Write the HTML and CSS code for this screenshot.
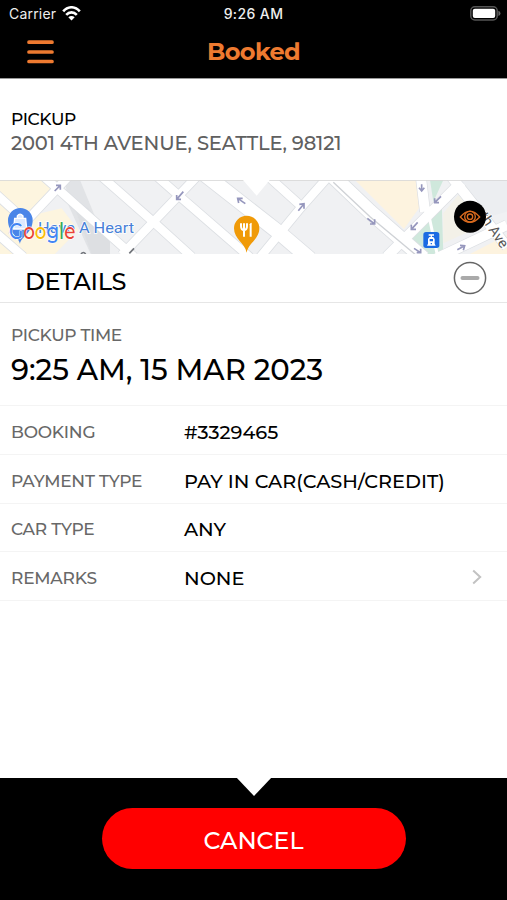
FILE: index.html
```html
<!DOCTYPE html>
<html lang="en">
<head>
<meta charset="utf-8">
<title>Booked</title>
<link rel="stylesheet" href="styles.css">
</head>
<body>
<div class="app">
  <header class="top">
    <div class="status">
      <div class="carrier"><span class="carrier-name">Carrier</span>
        <svg class="wifi" width="19" height="15" viewBox="0 0 19 15" fill="none" stroke="#fff" stroke-width="2.6"><path d="M1.2 5.4C6-.1 13-.1 17.8 5.4M4.2 8.8C7.3 5.5 11.7 5.5 14.8 8.8"/><path d="M6.3 11.2Q9.5 8.7 12.7 11.2L9.5 14.6Z" fill="#fff" stroke="none"/></svg>
      </div>
      <span class="clock">9:26 AM</span>
      <svg class="battery" width="31" height="15" viewBox="0 0 31 15"><rect x=".8" y=".8" width="26.4" height="13.2" rx="4" fill="#000" stroke="#555" stroke-width="1.5"/><rect x="2.8" y="2.8" width="22.4" height="9.2" rx="2" fill="#fff"/><path d="M28.4 4.8Q30.5 5.6 30.5 7.4T28.4 10Z" fill="#666"/></svg>
    </div>
    <div class="nav">
      <svg class="menu" width="27" height="24" viewBox="0 0 27 24" stroke="#ee7a30" stroke-width="3.7" stroke-linecap="round"><path d="M2 2.2H25M2 12H25M2 21.5H25"/></svg>
      <h1 class="title">Booked</h1>
    </div>
  </header>

  <section class="address">
    <h2 class="pickup">PICKUP</h2>
    <p class="street">2001 4TH AVENUE, SEATTLE, 98121</p>
  </section>

  <svg class="map" width="507" height="74" viewBox="0 15 1521 222">
    <rect y="15" width="1521" height="222" fill="#f0f1f3"/>
    <path d="M0 15H185L100 120L185 100L235 165L165 237H0Z" fill="#fdf5df"/>
    <path d="M195 15H240L275 100L330 237H272L205 90Z" fill="#e1e3e6"/>
    <path d="M215 75L265 100L330 200V237H275Z" fill="#dddfe2"/>
    <path d="M1065 15H1255L1260 95L1212 162Z" fill="#fdf3df"/>
    <path d="M1235 180L1325 75L1330 237H1250Z" fill="#cfe8dc"/>
    <path d="M1290 15H1330L1300 80Z" fill="#cfe8dc"/>
    <path d="M1330 115L1375 60L1450 150L1330 205Z" fill="#f3f1e8"/>
    <path d="M1370 15H1521V110L1450 130Z" fill="#eceef1"/>
    <path d="M1410 237L1521 180V237Z" fill="#fdf3df"/>
    <g fill="none" stroke="#dcdfe3">
      <path stroke-width="30" d="M115 -10L402 245M-20 50L85 145M-10 175L70 245M35 185L205 5M300 0L465 145L575 245M365 240L595 0M455 -10L540 65L750 247M800 0L905 95M780 247L905 95L985 5"/>
      <path stroke-width="48" d="M610 -5L840 175L930 252M1000 5L1110 110L1270 250"/>
      <path stroke-width="34" d="M1262 0L1275 110M1160 245L1385 20M1350 0L1521 215M1310 250L1521 150"/>
    </g>
    <g fill="none" stroke="#fff">
      <path stroke-width="25" d="M115 -10L402 245M-20 50L85 145M-10 175L70 245M35 185L205 5M300 0L465 145L575 245M365 240L595 0M455 -10L540 65L750 247M800 0L905 95M780 247L905 95L985 5"/>
      <path stroke-width="43" d="M610 -5L840 175L930 252M1000 5L1110 110L1270 250"/>
      <path stroke-width="30" d="M1262 0L1275 110M1160 245L1385 20M1350 0L1521 215M1310 250L1521 150"/>
      <path stroke-width="9" d="M1280 90L1312 240"/>
    </g>
    <path d="M1000 22L1110 125L1250 242" fill="none" stroke="#cfd2d6" stroke-width="4"/>
    <g fill="none" stroke="#9697bd" stroke-width="5">
      <path d="M164 48L181 31M168 31H181V44"/>
      <path d="M550 50L530 73M530 60V73H543M736 86L713 70M716 84L713 70L728 70M895 107L912 86M898 88L912 86V101"/>
      <path d="M1102 130L1124 147M1124 133V147H1110M1265 28V46M1257 38L1265 48L1273 38M1323 64L1304 83M1304 70V83H1317M1253 142L1234 163M1234 149V163H1248M1372 224L1394 212M1380 211L1394 212L1390 226M1242 220L1262 233M1262 221V233H1250"/>
      <path d="M388 235L402 220M243 237Q250 228 257 237" stroke="#72757b"/>
    </g>
    <path d="M60 207C56 185 24 173 24 136A37 37 0 0 1 98 136C98 173 64 185 60 207Z" fill="#4a85e8"/>
    <path d="M44 130H77L80 162H41ZM52 130V123Q60 112 69 123V130" fill="#dce9ff" stroke="#fff" stroke-width="4"/>
    <text x="114" y="174" class="place" textLength="288" lengthAdjust="spacingAndGlyphs">Have A Heart</text>
    <text x="27" y="193" class="google" textLength="199" lengthAdjust="spacingAndGlyphs"><tspan fill="#4285f4">G</tspan><tspan fill="#ea4335">o</tspan><tspan fill="#fbbc05">o</tspan><tspan fill="#4285f4">g</tspan><tspan fill="#34a853">l</tspan><tspan fill="#ea4335">e</tspan></text>
    <path d="M740 233C735 204 702 193 702 160A38 38 0 0 1 778 160C778 193 745 204 740 233Z" fill="#f09a08"/>
    <path d="M723 145V153Q723 165 732 165T741 153V145M732 145V185" fill="none" stroke="#fff" stroke-width="6"/><path d="M749 185V148Q750 143 755 143V185Z" fill="#fff"/>
    <rect x="1270" y="171" width="48" height="48" rx="8" fill="#1a6be3"/>
    <path d="M1286 180H1302M1294 179V187" stroke="#fff" stroke-width="4"/><path d="M1288 186H1300L1304 192V206L1307 212H1281L1284 206V192Z" fill="#fff"/><path d="M1289 192H1299V199H1289ZM1292 204H1296V208H1292Z" fill="#1a6be3"/>
    <text x="1437" y="124" class="road" transform="rotate(56 1437 124)">th Ave</text>
    <circle cx="1410" cy="125" r="48" fill="#000"/>
    <g fill="none" stroke="#d96a1e" stroke-width="4"><path d="M1381 126Q1410 91 1439 126Q1410 158 1381 126Z"/><circle cx="1410" cy="125" r="16"/><circle cx="1410" cy="125" r="8"/></g>
    <path d="M0 16H1521" stroke="#d8d8d8" stroke-width="3"/>
    <path d="M729 15H809L770 62Z" fill="#fff"/>
  </svg>

  <section class="details">
    <h2 class="details-title">DETAILS</h2>
    <svg class="collapse" width="34" height="34" viewBox="0 0 34 34"><circle cx="17" cy="17" r="15.6" fill="#fff" stroke="#666" stroke-width="1.5"/><path d="M9.5 17H24.5" stroke="#aaa" stroke-width="4" stroke-linecap="round"/></svg>
  </section>

  <section class="time">
    <h3 class="time-label">PICKUP TIME</h3>
    <p class="time-value">9:25 AM, 15 MAR 2023</p>
  </section>

  <dl class="rows">
    <div class="row"><dt>BOOKING</dt><dd>#3329465</dd></div>
    <div class="row"><dt>PAYMENT TYPE</dt><dd>PAY IN CAR(CASH/CREDIT)</dd></div>
    <div class="row"><dt>CAR TYPE</dt><dd>ANY</dd></div>
    <div class="row"><dt>REMARKS</dt><dd>NONE</dd>
      <svg class="chevron" width="10" height="16" viewBox="0 0 10 16" fill="none" stroke="#c2c2c2" stroke-width="2"><path d="M1.2 1.5L8.2 8L1.2 14.5"/></svg></div>
  </dl>

  <footer class="bottom">
    <svg class="notch" width="36" height="19" viewBox="0 0 36 19"><path d="M0 0H36L18 19Z" fill="#fff"/></svg>
    <button class="cancel">CANCEL</button>
  </footer>
</div>
</body>
</html>
```
FILE: styles.css
```css
* { box-sizing: border-box; margin: 0; padding: 0; }
body { background: #fff; color: #000; font-family: Montserrat, Inter, sans-serif; font-weight: 500; }
.app { width: 507px; height: 900px; display: flex; flex-direction: column; overflow: hidden; }

.top { height: 79px; background: #000; border-bottom: 1px solid #999; flex: none; }
.status { height: 27px; display: grid; grid-template-columns: 1fr auto 1fr; align-items: center; padding: 0 6px 0 9px; color: #eee; font-family: Inter, sans-serif; font-size: 14px; }
.carrier { display: flex; align-items: center; gap: 6px; }
.carrier-name { font-weight: 400; letter-spacing: .2px; }
.wifi { margin-top: -1px; }
.clock { font-size: 14px; letter-spacing: .4px; margin-left: -3px; }
.battery { justify-self: end; }
.nav { height: 51px; display: grid; grid-template-columns: 80px 1fr 80px; align-items: center; }
.menu { margin-left: 27px; margin-top: -1px; }
.title { text-align: center; color: #ee7a30; font-size: 24px; font-weight: 700; line-height: 30px; letter-spacing: -.6px; margin-top: -2px; }

.address { height: 101px; padding: 29px 11px 0; flex: none; }
.pickup { font-size: 17px; font-weight: 500; line-height: 22px; letter-spacing: -.4px; }
.street { font-size: 19.5px; font-weight: 500; line-height: 26px; letter-spacing: -.16px; color: #606060; white-space: nowrap; }

.map { display: block; flex: none; }
.place { font: 400 43px Roboto, sans-serif; fill: #4780d8; stroke: #fff; stroke-width: 4px; paint-order: stroke; }
.google { font: 500 68px Montserrat, sans-serif; stroke: #fff; stroke-width: 3px; paint-order: stroke; }
.road { font: 400 43px Roboto, sans-serif; fill: #555; stroke: #fff; stroke-width: 4px; paint-order: stroke; }

.details { height: 49px; display: flex; align-items: center; justify-content: space-between; padding: 0 20px 0 25px; border-bottom: 1px solid #e6e6e6; flex: none; }
.details-title { font-size: 24px; font-weight: 500; line-height: 30px; letter-spacing: -.3px; padding-top: 8px; }
.time { height: 103px; padding: 21px 11px 0; border-bottom: 1px solid #f4f4f4; flex: none; }
.time-label { font-size: 17px; font-weight: 500; line-height: 22px; letter-spacing: -.35px; color: #686868; }
.time-value { font-size: 29.1px; line-height: 36px; margin-top: 6px; white-space: nowrap; }

.row { height: 48.8px; display: grid; grid-template-columns: 173px 1fr auto; align-items: center; padding: 4px 25px 0 11px; border-bottom: 1px solid #f4f4f4; }
.row dt { font-size: 17px; font-weight: 500; letter-spacing: -.22px; color: #686868; }
.row dd { font-size: 19.3px; white-space: nowrap; }
.chevron { margin-top: -2px; }

.bottom { height: 122px; margin-top: auto; background: #000; display: flex; justify-content: center; padding-top: 30px; position: relative; flex: none; }
.notch { position: absolute; top: -1px; left: 236px; }
.cancel { width: 304px; height: 61px; border: 0; border-radius: 31px; background: #f00; color: #fff; font-family: inherit; font-size: 23.7px; font-weight: 500; padding-top: 3px; }
```
